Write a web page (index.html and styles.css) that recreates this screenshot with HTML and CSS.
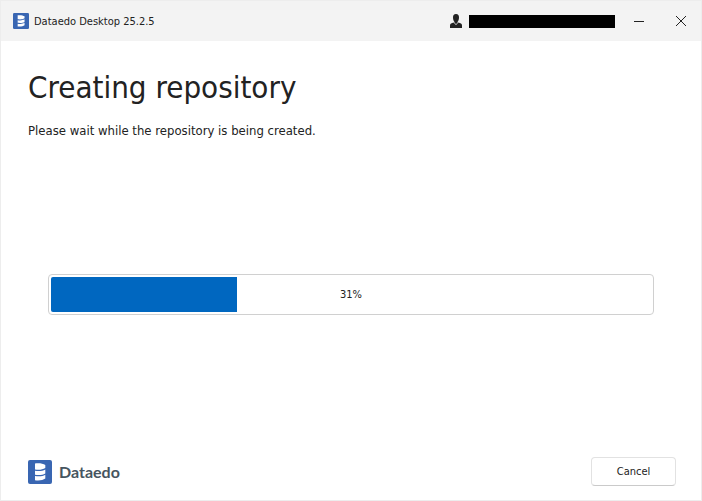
FILE: index.html
```html
<!DOCTYPE html>
<html lang="en">
<head>
    <meta charset="UTF-8">
    <title>Dataedo Desktop 25.2.5</title>
    <link rel="stylesheet" href="styles.css">
</head>
<body>
    <div class="window">
        <header class="titlebar">
            <svg class="app-icon" viewBox="0 0 24 24" aria-hidden="true">
                <rect width="24" height="24" rx="2" fill="#3966b2"/>
                <path fill="#fff" d="M7 3.500C11 3 15 3.500 17.300 5V8C14.500 9.800 11 10 7 9.500ZM7 10.800C11 11.500 15 11 17.300 9.500V13.500C15 15 11 15.300 7 14.800ZM7 16C11 16.700 15 16.300 17.300 14.800V18.500C15 20.300 11 20.700 7 20.200Z"/>
            </svg>
            <span class="app-title">Dataedo Desktop 25.2.5</span>
            <div class="account">
                <svg class="user-icon" viewBox="0 0 12 14" aria-hidden="true">
                    <path fill="#222" d="M6 0C8.200 0 9 1.500 9 3.500C9 5.500 8.200 7.500 7.500 8V9L6 10L4.500 9V8C3.800 7.500 3 5.500 3 3.500C3 1.500 3.800 0 6 0ZM3.500 8.500L6 11L8.500 8.500L11 9.500Q12 10 12 11.500V14H0V11.500Q0 10 1 9.500Z"/>
                </svg>
                <span class="account-name"></span>
            </div>
            <button type="button" class="window-button" aria-label="Minimize">
                <svg viewBox="0 0 12 12"><path d="M1 6.500H11"/></svg>
            </button>
            <button type="button" class="window-button" aria-label="Close">
                <svg viewBox="0 0 12 12"><path d="M1 1L11 11M11 1L1 11"/></svg>
            </button>
        </header>
        <main class="content">
            <h1>Creating repository</h1>
            <p>Please wait while the repository is being created.</p>
            <div class="progress-box">
                <progress id="repository-progress" value="31" max="100"></progress>
                <label for="repository-progress">31%</label>
            </div>
        </main>
        <footer class="footer">
            <div class="brand">
                <svg class="brand-icon" viewBox="0 0 24 24" aria-hidden="true">
                    <rect width="24" height="24" rx="2" fill="#3966b2"/>
                    <path fill="#fff" d="M7 3.500C11 3 15 3.500 17.300 5V8C14.500 9.800 11 10 7 9.500ZM7 10.800C11 11.500 15 11 17.300 9.500V13.500C15 15 11 15.300 7 14.800ZM7 16C11 16.700 15 16.300 17.300 14.800V18.500C15 20.300 11 20.700 7 20.200Z"/>
                </svg>
                <span class="brand-name">Dataedo</span>
            </div>
            <button type="button" class="cancel">Cancel</button>
        </footer>
    </div>
</body>
</html>
```

FILE: styles.css
```css
* {
    box-sizing: border-box;
}

body {
    margin: 0;
    font-family: "DejaVu Sans Condensed", Tahoma, sans-serif;
    font-size: 11px;
    color: #222;
    background-color: #fff;
}

.window {
    display: flex;
    flex-direction: column;
    min-height: 100vh;
    border: 1px solid #ededed;
}

/* title bar */
.titlebar {
    display: flex;
    align-items: center;
    height: 40px;
    padding-left: 12px;
    background-color: #f3f3f3;
}

.app-icon {
    width: 16px;
    height: 16px;
    margin-right: 5px;
}

.account {
    display: flex;
    align-items: center;
    gap: 7px;
    margin-left: auto;
    margin-right: 2px;
}

.user-icon {
    width: 12px;
    height: 14px;
}

.account-name {
    width: 146px;
    height: 13px;
    background-color: #000;
}

.window-button {
    display: flex;
    align-items: center;
    justify-content: center;
    width: 40px;
    height: 40px;
    margin-left: 2px;
    padding: 0;
    border: none;
    background: none;
}

.window-button svg {
    width: 12px;
    height: 12px;
    fill: none;
    stroke: #222;
}

/* content */
.content {
    flex: 1;
    padding: 24px 27px;
}

h1 {
    margin: 0;
    font-size: 31px;
    line-height: 44px;
    font-weight: normal;
}

p {
    margin: 14px 0 0;
    font-size: 13px;
    line-height: 16px;
}

.progress-box {
    position: relative;
    height: 41px;
    margin: 135px 20px 0;
    padding: 2px;
    border: 1px solid #d0d0d0;
    border-radius: 4px;
}

progress {
    display: block;
    width: 100%;
    height: 100%;
    border: none;
    border-radius: 2px;
    overflow: hidden;
    appearance: none;
    -webkit-appearance: none;
}

progress::-webkit-progress-bar {
    background-color: #fff;
}

progress::-webkit-progress-value {
    background-color: #0067c0;
}

.progress-box label {
    position: absolute;
    inset: 0;
    display: flex;
    align-items: center;
    justify-content: center;
}

/* footer */
.footer {
    display: flex;
    align-items: center;
    justify-content: space-between;
    padding: 0 25px 14px 27px;
}

.brand {
    display: flex;
    align-items: center;
    gap: 7px;
}

.brand-icon {
    width: 24px;
    height: 24px;
}

.brand-name {
    font-family: Lato, sans-serif;
    font-size: 16px;
    font-weight: bold;
    line-height: 24px;
    color: #465560;
}

.cancel {
    width: 85px;
    height: 29px;
    padding: 0;
    border: 1px solid #e2e2e2;
    border-bottom-color: #cacaca;
    border-radius: 4px;
    background-color: #fff;
    font-family: inherit;
    font-size: 11px;
    color: #222;
}
```
